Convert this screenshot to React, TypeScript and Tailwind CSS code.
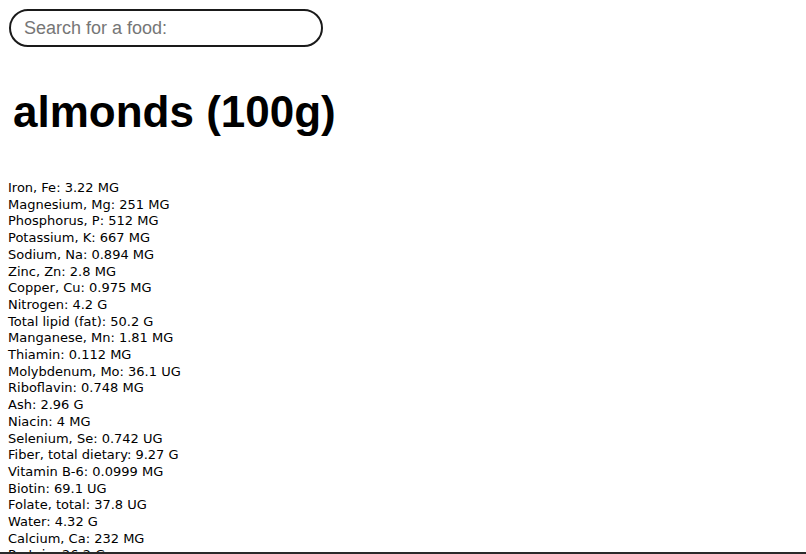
import { useState } from 'react'

interface Nutrient {
  name: string
  amount: string
  unit: string
}

const nutrients: Nutrient[] = [
  { name: 'Iron, Fe', amount: '3.22', unit: 'MG' },
  { name: 'Magnesium, Mg', amount: '251', unit: 'MG' },
  { name: 'Phosphorus, P', amount: '512', unit: 'MG' },
  { name: 'Potassium, K', amount: '667', unit: 'MG' },
  { name: 'Sodium, Na', amount: '0.894', unit: 'MG' },
  { name: 'Zinc, Zn', amount: '2.8', unit: 'MG' },
  { name: 'Copper, Cu', amount: '0.975', unit: 'MG' },
  { name: 'Nitrogen', amount: '4.2', unit: 'G' },
  { name: 'Total lipid (fat)', amount: '50.2', unit: 'G' },
  { name: 'Manganese, Mn', amount: '1.81', unit: 'MG' },
  { name: 'Thiamin', amount: '0.112', unit: 'MG' },
  { name: 'Molybdenum, Mo', amount: '36.1', unit: 'UG' },
  { name: 'Riboflavin', amount: '0.748', unit: 'MG' },
  { name: 'Ash', amount: '2.96', unit: 'G' },
  { name: 'Niacin', amount: '4', unit: 'MG' },
  { name: 'Selenium, Se', amount: '0.742', unit: 'UG' },
  { name: 'Fiber, total dietary', amount: '9.27', unit: 'G' },
  { name: 'Vitamin B-6', amount: '0.0999', unit: 'MG' },
  { name: 'Biotin', amount: '69.1', unit: 'UG' },
  { name: 'Folate, total', amount: '37.8', unit: 'UG' },
  { name: 'Water', amount: '4.32', unit: 'G' },
  { name: 'Calcium, Ca', amount: '232', unit: 'MG' },
  { name: 'Protein', amount: '26.2', unit: 'G' },
]

export default function App() {
  const [query, setQuery] = useState('')

  return (
    <div className="h-[554px] overflow-hidden border-b-2 border-[#2a2a2a] bg-white text-black">
      <div className="flex px-2 pt-[9px]">
        <input
          value={query}
          onChange={(e) => setQuery(e.target.value)}
          placeholder="Search for a food:"
          className="ml-px block h-[38px] w-[314px] rounded-[19px] border-2 border-[#1a1a1a] px-[13px] font-['Liberation_Sans',Arial,sans-serif] text-[18px] text-black outline-none placeholder:text-[#767676]"
        />
      </div>

      {/* food title */}
      <h1 className="mt-[40px] pl-[13px] font-['Liberation_Sans',Arial,sans-serif] text-[44px] font-bold leading-[50px]">
        almonds (100g)
      </h1>

      <ul className="mt-[43px] pl-2 font-['DejaVu_Sans',Verdana,sans-serif] text-[13px] leading-[16.7px]">
        {nutrients.map((n) => (
          <li key={n.name}>
            {n.name}: {n.amount} {n.unit}
          </li>
        ))}
      </ul>
    </div>
  )
}
